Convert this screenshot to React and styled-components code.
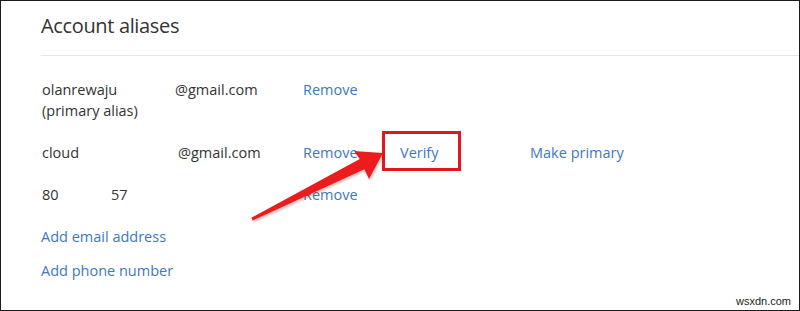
import styled, { createGlobalStyle } from "styled-components";

const GlobalStyle = createGlobalStyle`
    html, body {
        margin: 0;
        padding: 0;
        background: #fff;
    }
`;

const aliases = [
    { parts: [{ text: "olanrewaju", width: 133 }, { text: "@gmail.com" }], note: "(primary alias)", actions: ["Remove"] },
    { parts: [{ text: "cloud", width: 136 }, { text: "@gmail.com" }], actions: ["Remove", "Verify", "Make primary"] },
    { parts: [{ text: "80", width: 69 }, { text: "57" }], actions: ["Remove"] },
];

const App = () => {
    return (
        <>
            <GlobalStyle />
            <Frame>
                <Title>Account aliases</Title>
                <Divider />
                <AliasList>
                    {aliases.map((alias, idx) => (
                        <AliasRow key={idx}>
                            <AliasCell>
                                <AliasLine>
                                    {alias.parts.map((part, i) => (
                                        <AliasPart key={i} $width={part.width}>
                                            {part.text}
                                        </AliasPart>
                                    ))}
                                </AliasLine>
                                {alias.note && <div>{alias.note}</div>}
                            </AliasCell>
                            {alias.actions.map((action) => (
                                <ActionLink key={action} $boxed={action === "Verify"}>
                                    {action}
                                </ActionLink>
                            ))}
                        </AliasRow>
                    ))}
                </AliasList>
                <AddLinks>
                    <AddLink>Add email address</AddLink>
                    <AddLink>Add phone number</AddLink>
                </AddLinks>
                <Arrow viewBox="0 0 800 311" width="800" height="311">
                    <polygon
                        points="251.4,217.7 359.8,159 354,151 383,153 369,179 364.4,169.2 252.7,220.5"
                        fill="#ec1c1c"
                    />
                </Arrow>
                <Watermark>wsxdn.com</Watermark>
            </Frame>
        </>
    );
};

export default App;

const Frame = styled.div`
    position: relative;
    box-sizing: border-box;
    width: 800px;
    height: 311px;
    padding: 11px 0 0 40px;
    border: 1.5px solid #1c1c1c;
    border-bottom-width: 1px;
    overflow: hidden;

    font-family: "Open Sans", "Noto Sans", sans-serif;
    color: #333;
`;

const Title = styled.h2`
    margin: 0;
    font-size: 20px;
    font-weight: 400;
    letter-spacing: -0.35px;
    line-height: 28px;
    color: #333;
`;

const Divider = styled.div`
    height: 1px;
    margin: 15px 0 23px 0;
    background: #e8e8e8;
`;

const AliasList = styled.div`
    display: flex;
    flex-direction: column;
    gap: 21px;
    padding-left: 1px;
`;

const AliasRow = styled.div`
    display: grid;
    grid-template-columns: 261px 97px 130px auto;
    font-size: 14.5px;
    line-height: 21px;
`;

const AliasCell = styled.div`
    color: #333;
`;

const AliasLine = styled.div`
    display: flex;
`;

const AliasPart = styled.span`
    width: ${(props) => (props.$width ? `${props.$width}px` : "auto")};
`;

const ActionLink = styled.a`
    position: relative;
    color: #3d78c0;
    cursor: pointer;

    &::after {
        content: "";
        display: ${(props) => (props.$boxed ? "block" : "none")};
        position: absolute;
        left: -18px;
        top: -11px;
        width: 79px;
        height: 40px;
        box-sizing: border-box;
        border: 3px solid #e4151b;
    }
`;

const AddLinks = styled.div`
    display: flex;
    flex-direction: column;
    gap: 13px;
    margin-top: 21px;
`;

const AddLink = styled.a`
    width: fit-content;
    font-size: 14.5px;
    line-height: 21px;
    color: #3d78c0;
    cursor: pointer;
`;

const Arrow = styled.svg`
    position: absolute;
    left: -1.5px;
    top: -1.5px;
    filter: drop-shadow(1px 2px 1px rgba(120, 0, 0, 0.25));
    pointer-events: none;
`;

const Watermark = styled.span`
    position: absolute;
    right: 8px;
    bottom: 3px;
    font-family: "Liberation Sans", Arial, sans-serif;
    font-size: 11px;
    color: #222;
`;
